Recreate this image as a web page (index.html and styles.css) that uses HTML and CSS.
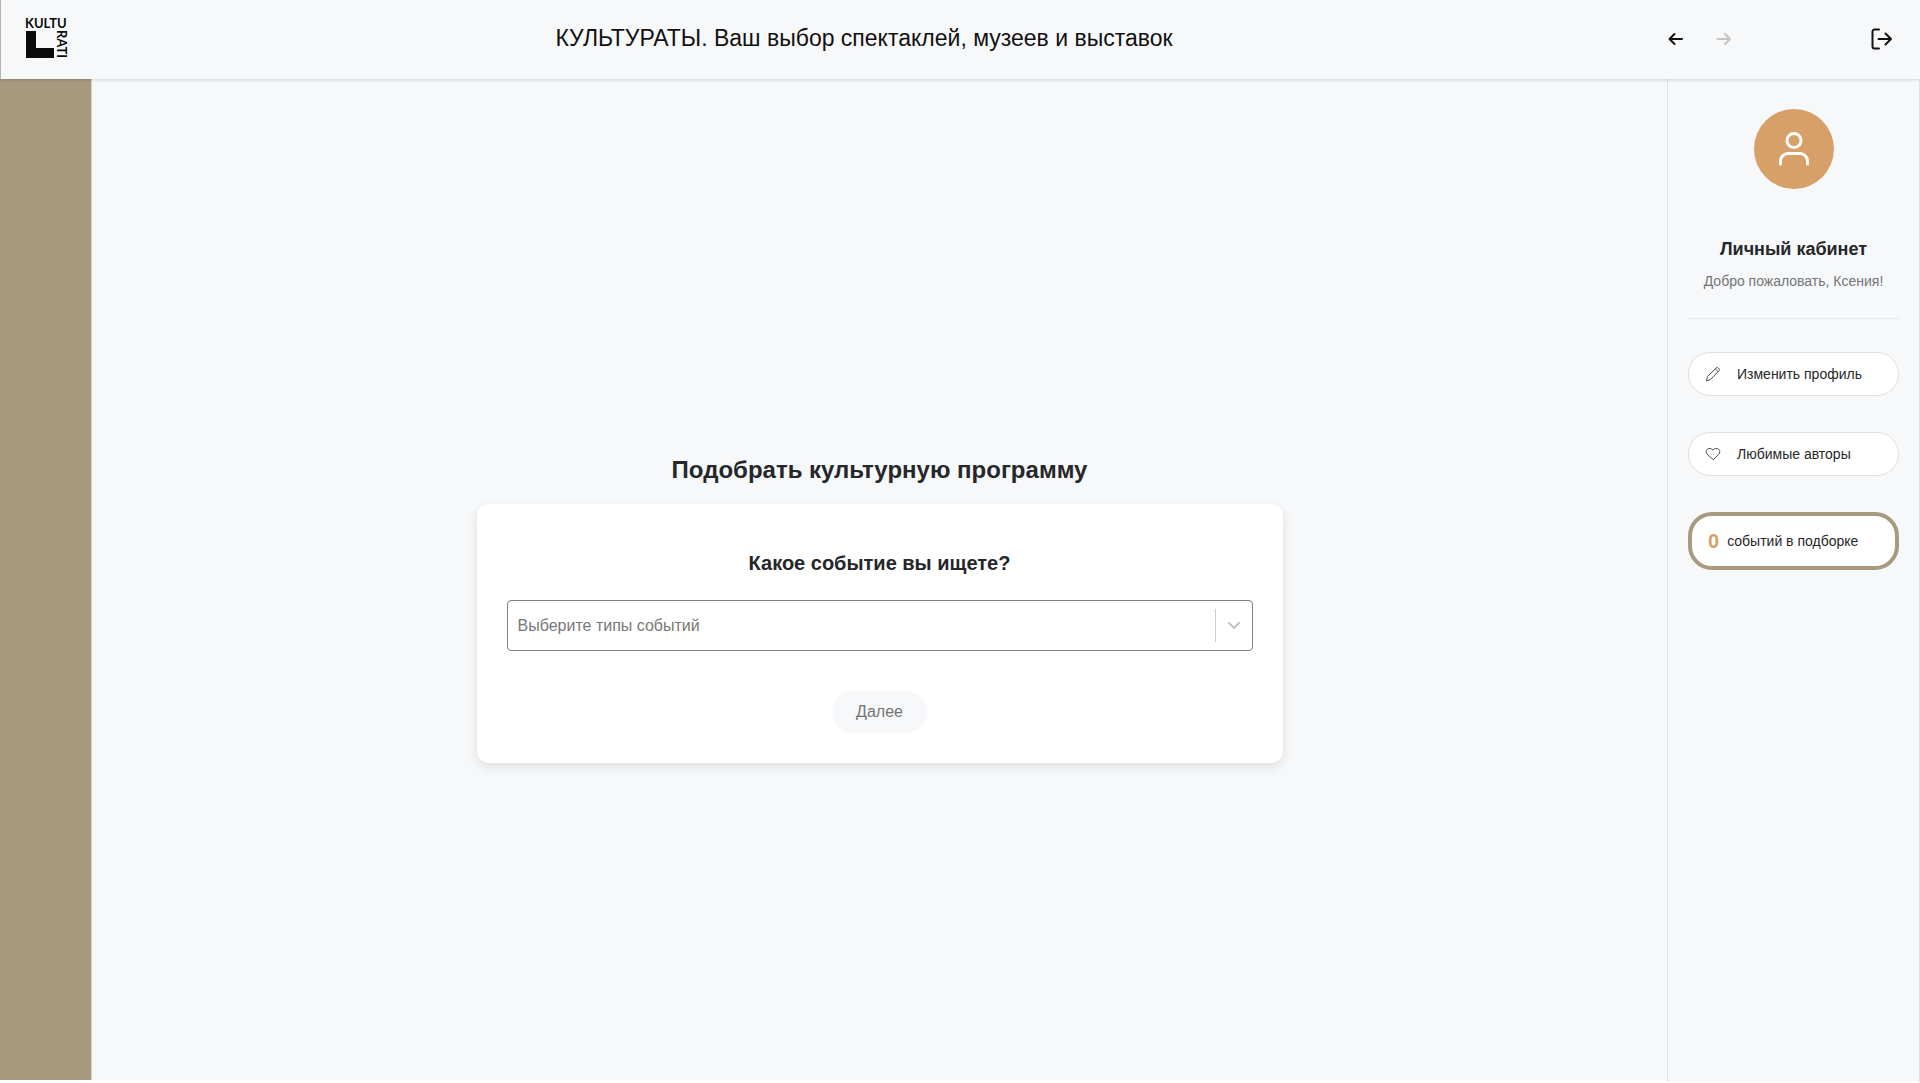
FILE: index.html
```html
<!DOCTYPE html>
<html lang="ru">
<head>
    <meta charset="UTF-8">
    <meta name="viewport" content="width=device-width, initial-scale=1.0">
    <title>Культураты</title>
    <link rel="stylesheet" href="styles.css">
</head>
<body>

<header class="header">
    <a href="#" class="logo" aria-label="Kulturati">
        <svg width="42" height="42" viewBox="0 0 42 42">
            <text x="-1" y="10">KULTU</text>
            <path d="M0 13h10v17h18v10H0z"/>
            <text transform="translate(31 12) rotate(90)">RATI</text>
        </svg>
    </a>
    <div class="header-title">КУЛЬТУРАТЫ. Ваш выбор спектаклей, музеев и выставок</div>
    <nav class="header-nav">
        <div class="history">
            <button class="icon-btn" aria-label="Назад">
                <svg width="16" height="16" viewBox="0 0 16 16"><path d="M14 8H1.500M6.500 3 1.500 8l5 5"/></svg>
            </button>
            <button class="icon-btn" aria-label="Вперёд" disabled>
                <svg width="16" height="16" viewBox="0 0 16 16"><path d="M1.500 8H14M9 3l5 5-5 5"/></svg>
            </button>
        </div>
        <button class="icon-btn" aria-label="Выйти">
            <svg width="22" height="22" viewBox="0 0 22 22"><path d="M8 1.500H3.500a2 2 0 0 0-2 2v15a2 2 0 0 0 2 2H8M7.500 11H20M14.500 5.500 20 11l-5.500 5.500"/></svg>
        </button>
    </nav>
</header>

<div class="container">
    <div class="left-pane"></div>

    <main class="main">
        <h1>Подобрать культурную программу</h1>
        <form class="card">
            <h2><label for="eventType">Какое событие вы ищете?</label></h2>
            <div class="select-box">
                <select id="eventType">
                    <option>Выберите типы событий</option>
                </select>
                <span class="separator"></span>
                <svg class="chevron" width="12" height="8" viewBox="0 0 12 8"><path d="M1 1l5 5 5-5"/></svg>
            </div>
            <button type="button" class="next-btn" disabled>Далее</button>
        </form>
    </main>

    <aside class="sidebar">
        <div class="avatar">
            <svg width="40" height="40" viewBox="0 0 40 40">
                <circle cx="20" cy="11.500" r="7"/>
                <path d="M6.500 35v-3a7.500 7.500 0 0 1 7.500-7.500h12a7.500 7.500 0 0 1 7.500 7.500v3"/>
            </svg>
        </div>
        <h3>Личный кабинет</h3>
        <p class="welcome">Добро пожаловать, Ксения!</p>
        <hr>
        <button class="side-btn">
            <svg width="16" height="16" viewBox="0 0 16 16"><path d="M1.500 14.500l1-4L11.500 1.800a1 1 0 0 1 1.500 0l1.200 1.200a1 1 0 0 1 0 1.500l-8.700 9zM10.500 3l2.500 2.500"/></svg>
            Изменить профиль
        </button>
        <button class="side-btn">
            <svg width="16" height="16" viewBox="0 0 16 16"><path d="M8 13.500 2.200 8.200C.8 6.700.8 4.400 2.300 3.200 4 2 6.500 2.300 8 4c1.500-1.700 4-2 5.700-.8 1.500 1.200 1.500 3.500.1 5z"/></svg>
            Любимые авторы
        </button>
        <button class="selection-btn"><strong>0</strong> событий в подборке</button>
    </aside>
</div>

</body>
</html>
```

FILE: styles.css
```css
* {
    box-sizing: border-box;
}

body {
    display: flex;
    flex-direction: column;
    min-height: 100vh;
    margin: 0;
    font-family: "Liberation Sans", Arial, sans-serif;
    background-color: #ffffff;
    color: #252729;
}

button, select {
    font-family: inherit;
    color: inherit;
    border: none;
    padding: 0;
    cursor: pointer;
}

svg {
    fill: none;
    stroke: currentColor;
    stroke-linecap: round;
    stroke-linejoin: round;
    flex-shrink: 0;
}

.header {
    display: grid;
    grid-template-columns: 91px 1fr 284px;
    align-items: center;
    height: 79px;
    padding-bottom: 2px;
    background-color: #f7f8fa;
    border-left: 1px solid #b8b6b1;
    color: #111111;
    box-shadow: 0 1px 3px rgba(0, 0, 0, 0.15);
    z-index: 1;
}

.logo {
    display: flex;
    padding-left: 25px;
    color: #0b0b0b;
}

.logo svg {
    fill: currentColor;
    stroke: none;
    font: bold 13px Lato, sans-serif;
    overflow: visible;
}

.header-title {
    font-size: 23px;
    text-align: center;
}

.header-nav {
    display: flex;
    justify-content: space-between;
    align-items: center;
    padding: 0 27px 0 32px;
}

.history {
    display: flex;
    gap: 32px;
}

.icon-btn {
    display: flex;
    background: none;
}

.icon-btn svg {
    stroke-width: 2;
}

.icon-btn:disabled {
    color: #c4c4c2;
}

.container {
    display: flex;
    flex: 1;
}

.left-pane {
    width: 92px;
    margin-bottom: 3px;
    background-color: #a79a7e;
    border-right: 1px solid #d4d0c6;
}

.main {
    flex: 1;
    display: flex;
    flex-direction: column;
    align-items: center;
    justify-content: center;
    margin-bottom: 3px;
    padding: 60px 20px 0;
    background-color: #f7f8fa;
}

h1 {
    margin: 0 0 20px;
    font-size: 24px;
    line-height: 28px;
}

.card {
    display: flex;
    flex-direction: column;
    align-items: center;
    width: 100%;
    max-width: 806px;
    padding: 46px 30px 30px;
    background-color: #ffffff;
    border-radius: 12px;
    box-shadow: 0 4px 12px rgba(0, 0, 0, 0.1);
}

h2 {
    margin: 0 0 24px;
    font-size: 20px;
    line-height: 26px;
}

.select-box {
    display: flex;
    align-items: center;
    width: 100%;
    height: 51px;
    margin-bottom: 40px;
    padding-right: 12px;
    border: 1px solid #808080;
    border-radius: 4px;
}

.select-box select {
    flex: 1;
    height: 100%;
    padding-left: 10px;
    appearance: none;
    background: none;
    font-size: 16px;
    color: #777777;
}

.separator {
    width: 1px;
    height: 33px;
    margin-right: 12px;
    background-color: #cccccc;
}

.chevron {
    color: #c4c4c4;
    stroke-width: 2;
}

.next-btn {
    height: 42px;
    padding: 0 24px;
    border-radius: 21px;
    background-color: #f7f8fa;
    font-size: 16px;
    color: #747474;
}

.sidebar {
    display: flex;
    flex-direction: column;
    align-items: center;
    width: 253px;
    margin-bottom: 1px;
    padding: 30px 20px;
    background-color: #f7f8fa;
    border-left: 1px solid #dfe2e4;
    border-right: 1px solid #dfe2e4;
}

.avatar {
    display: flex;
    align-items: center;
    justify-content: center;
    width: 80px;
    height: 80px;
    margin-bottom: 48px;
    border-radius: 50%;
    background-color: #d6a068;
    color: #ffffff;
}

.avatar svg {
    stroke-width: 3;
}

h3 {
    margin: 0 0 12px;
    font-size: 18px;
    line-height: 24px;
}

.welcome {
    margin: 0 0 29px;
    font-size: 14px;
    line-height: 16px;
    color: #737577;
}

hr {
    width: 100%;
    margin: 0 0 33px;
    border: none;
    border-top: 1px solid #e6e8ea;
}

.side-btn {
    display: flex;
    align-items: center;
    gap: 16px;
    width: 100%;
    height: 44px;
    margin-bottom: 36px;
    padding: 0 16px;
    border: 1px solid #dddfe1;
    border-radius: 22px;
    background-color: #ffffff;
    font-size: 14px;
}

.side-btn svg {
    color: #4c4e50;
}

.selection-btn {
    display: flex;
    align-items: center;
    gap: 8px;
    width: 100%;
    height: 58px;
    padding: 0 16px;
    border: 4px solid #a79a7e;
    border-radius: 24px;
    background-color: #ffffff;
    font-size: 14px;
}

.selection-btn strong {
    font-size: 20px;
    color: #d6a068;
}
```
